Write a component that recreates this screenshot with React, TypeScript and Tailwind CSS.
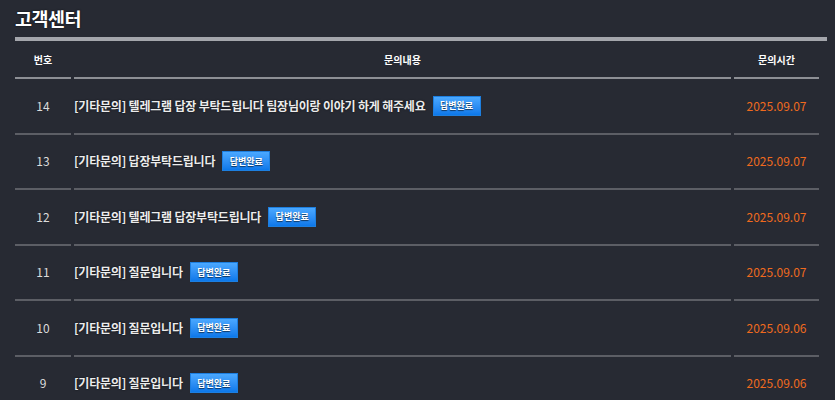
import React from 'react';

interface Inquiry {
  id: number;
  title: string;
  date: string;
}

const inquiries: Inquiry[] = [
  { id: 14, title: '[기타문의] 텔레그램 답장 부탁드립니다 팀장님이랑 이야기 하게 해주세요', date: '2025.09.07' },
  { id: 13, title: '[기타문의] 답장부탁드립니다', date: '2025.09.07' },
  { id: 12, title: '[기타문의] 텔레그램 답장부탁드립니다', date: '2025.09.07' },
  { id: 11, title: '[기타문의] 질문입니다', date: '2025.09.07' },
  { id: 10, title: '[기타문의] 질문입니다', date: '2025.09.06' },
  { id: 9, title: '[기타문의] 질문입니다', date: '2025.09.06' },
];

const font = { fontFamily: '"Noto Sans CJK KR", "Noto Sans", sans-serif' };

const AnsweredBadge = () => (
  <span className="ml-[7px] inline-flex h-[20px] w-[48px] items-center justify-center border border-[#1d7fe0] bg-gradient-to-b from-[#4aa8ff] to-[#0b78ea] text-[9px] font-bold text-white [text-shadow:0_1px_1px_rgba(0,0,0,0.6)]">
    답변완료
  </span>
);

export default function App() {
  return (
    <div className="min-h-[400px] w-full overflow-hidden bg-[#272a33] pl-[15px] text-white" style={font}>
      <h1 className="pt-[4px] text-[18.5px] font-bold leading-[28px] tracking-[-0.5px] [text-shadow:0_0_2px_rgba(0,0,0,0.8)]">
        고객센터
      </h1>
      <div className="mt-[5px] h-[4px] w-[812px] bg-[#a4a6ac]" />

      <div className="mt-[3px] grid w-[804px] grid-cols-[56px_657px_85px] gap-x-[3px]">
        {['번호', '문의내용', '문의시간'].map(h => (
          <div
            key={h}
            className="flex h-[35px] items-center justify-center border-b-2 border-[#8d8f95] pb-[2px] text-[10px] font-bold text-white"
          >
            {h}
          </div>
        ))}
      </div>

      <div className="grid w-[804px] grid-cols-[56px_657px_85px] gap-x-[3px] gap-y-[3px] pt-[3px]">
        {inquiries.map(q => (
          <React.Fragment key={q.id}>
            <div className="flex h-[52.5px] items-center justify-center border-b-2 border-[#5c5e65] pb-[3px] text-[12px] text-[#dcdcdc]">
              {q.id}
            </div>
            <div className="flex h-[52.5px] items-center border-b-2 border-[#5c5e65] pb-[3px]">
              <span className="text-[12px] font-bold tracking-[-0.2px] text-[#ececec] [text-shadow:0_0_2px_rgba(0,0,0,0.7)]">
                {q.title}
              </span>
              <AnsweredBadge />
            </div>
            <div className="flex h-[52.5px] items-center justify-center border-b-2 border-[#5c5e65] pb-[3px] text-[12px] text-[#f06a1e]">
              {q.date}
            </div>
          </React.Fragment>
        ))}
      </div>
    </div>
  );
}
